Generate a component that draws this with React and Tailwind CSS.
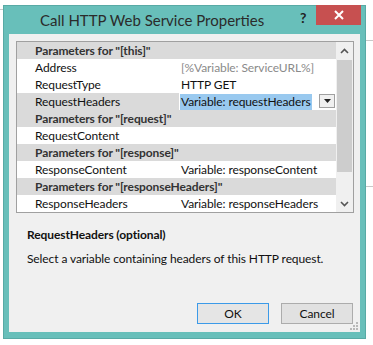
import React from 'react';

const rows = [
  { type: 'header', text: 'Parameters for "[this]"' },
  { name: 'Address', value: '[%Variable: ServiceURL%]', muted: true },
  { name: 'RequestType', value: 'HTTP GET' },
  { name: 'RequestHeaders', value: 'Variable: requestHeaders', selected: true },
  { type: 'header', text: 'Parameters for "[request]"' },
  { name: 'RequestContent', value: '' },
  { type: 'header', text: 'Parameters for "[response]"' },
  { name: 'ResponseContent', value: 'Variable: responseContent' },
  { type: 'header', text: 'Parameters for "[responseHeaders]"' },
  { name: 'ResponseHeaders', value: 'Variable: responseHeaders' },
];

function Chevron({ up }) {
  return (
    <svg width="9" height="6" viewBox="0 0 9 6">
      <polyline
        points={up ? '1,5 4.5,1.5 8,5' : '1,1 4.5,4.5 8,1'}
        fill="none"
        stroke="#555"
        strokeWidth="1.6"
      />
    </svg>
  );
}

function Row({ row }) {
  if (row.type === 'header') {
    return (
      <div className="h-[17px] bg-[#dadada] pl-[18px] flex items-center font-bold text-[#333] whitespace-nowrap">
        {row.text}
      </div>
    );
  }
  return (
    <div className="h-[17px] flex bg-white">
      <div className={`w-[162px] pl-[18px] flex items-center text-[#111] ${row.selected ? 'bg-[#dadada]' : ''}`}>
        {row.name}
      </div>
      <div className="flex-1 flex items-center pl-[1px] relative">
        {row.selected ? (
          <>
            <span className="bg-[#99c9ef] text-[#111] px-[1px] leading-[16px] whitespace-nowrap">{row.value}</span>
            <div className="absolute left-[140px] top-[1px] w-[16px] h-[14px] border border-[#a0a0a0] bg-[#f0f0f0] flex items-center justify-center">
              <svg width="7" height="4" viewBox="0 0 7 4"><polygon points="0,0 7,0 3.5,4" fill="#222" /></svg>
            </div>
          </>
        ) : (
          <span className={`pl-[1px] whitespace-nowrap ${row.muted ? 'text-[#8a8a8a]' : 'text-[#111]'}`}>{row.value}</span>
        )}
      </div>
    </div>
  );
}

export default function App() {
  return (
    <div className="w-[373px] h-[345px] bg-white overflow-hidden font-['Lato',sans-serif] text-[12px] tracking-[-0.1px] relative">
      <div className="absolute left-0 top-[9px] w-[3px] h-[1px] bg-[#c8c8c8]" />
      <div className="absolute right-0 top-[40px] w-[7px] h-[1px] bg-[#c8c8c8]" />
      <div className="absolute right-0 top-[186px] w-[7px] h-[1px] bg-[#c8c8c8]" />
      <div className="ml-[3px] mt-[5px] w-[363px] h-[334px] bg-[#68bfba] border border-[#58aaa5] flex flex-col">
        <div className="h-[28px] flex items-start">
          <div className="pl-[36px] pt-[4px] text-[15px] tracking-normal text-[#2b2b2b] leading-[20px] whitespace-nowrap flex-1">
            Call HTTP Web Service Properties
          </div>
          <div className="w-[10px] pt-[4px] font-bold text-[14px] text-[#222] leading-[16px] mr-[6px]">?</div>
          <div className="w-[45px] h-[20px] -mt-[1px] mr-[4px] bg-[#c75050] flex items-center justify-center">
            <svg width="10" height="10" viewBox="0 0 10 10">
              <path d="M1 1 L9 9 M9 1 L1 9" stroke="#fff" strokeWidth="2" />
            </svg>
          </div>
        </div>
        <div className="mx-[5px] h-[298px] bg-[#f0f0f0] flex flex-col relative">
          <div className="ml-[7px] mt-[7px] w-[338px] h-[172px] border border-[#a0a0a0] flex bg-white">
            <div className="w-[319px] flex flex-col">
              {rows.map((row, i) => (
                <Row key={i} row={row} />
              ))}
            </div>
            <div className="w-[17px] flex flex-col bg-[#f0f0f0]">
              <div className="h-[18px] flex items-center justify-center"><Chevron up /></div>
              <div className="h-[112px] mx-[1px] bg-[#cdcdcd]" />
              <div className="flex-1" />
              <div className="h-[17px] flex items-center justify-center"><Chevron /></div>
            </div>
          </div>
          <div className="ml-[18px] mt-[14px] font-bold text-[#111] leading-[16px]">RequestHeaders (optional)</div>
          <div className="ml-[18px] mt-[8px] text-[#111] leading-[16px]">Select a variable containing headers of this HTTP request.</div>
          <div className="mt-auto mb-[8px] flex justify-end gap-[12px] mr-[7px]">
            <button className="w-[72px] h-[21px] border border-[#3c9ae8] bg-[#e5e5e5] text-[#111] leading-[18px]">OK</button>
            <button className="w-[72px] h-[21px] border border-[#acacac] bg-[#e1e1e1] text-[#111] leading-[18px]">Cancel</button>
          </div>
          <svg className="absolute right-[1px] bottom-[1px]" width="10" height="10" viewBox="0 0 10 10" fill="#b8b8b8">
            <rect x="7" y="1" width="2" height="2" />
            <rect x="4" y="4" width="2" height="2" />
            <rect x="7" y="4" width="2" height="2" />
            <rect x="1" y="7" width="2" height="2" />
            <rect x="4" y="7" width="2" height="2" />
            <rect x="7" y="7" width="2" height="2" />
          </svg>
        </div>
      </div>
    </div>
  );
}
